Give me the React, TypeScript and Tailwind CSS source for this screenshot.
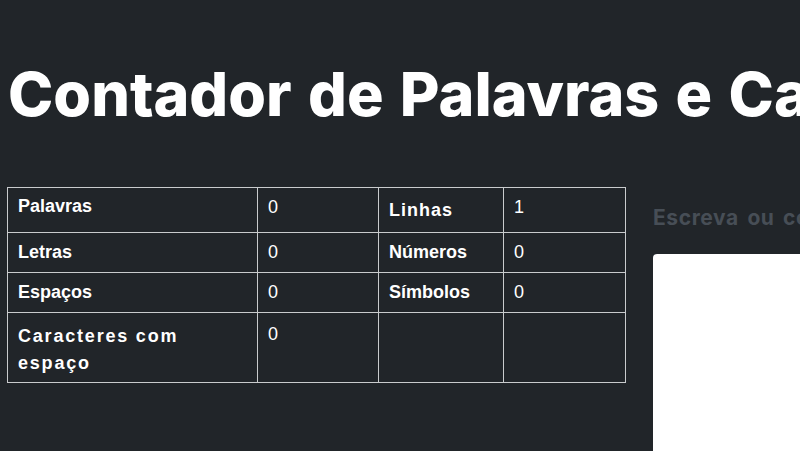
const stats = [
  { label: "Palavras", value: "0", label2: "Linhas", value2: "1" },
  { label: "Letras", value: "0", label2: "Números", value2: "0" },
  { label: "Espaços", value: "0", label2: "Símbolos", value2: "0" },
  { label: "Caracteres com espaço", value: "0", label2: "", value2: "" },
];

const cell = "border border-[#c9cbcd] px-[10px] align-top";

export default function App() {
  return (
    <div className="h-[451px] w-full overflow-hidden bg-[#212529] text-white [font-family:'Liberation_Sans',Arial,sans-serif]">
      <h1 className="pt-[64px] pl-[8px] whitespace-nowrap text-[61px] leading-[61px] font-extrabold tracking-[0px] [word-spacing:3px] [font-family:Inter,sans-serif]">
        Contador de Palavras e Caracteres
      </h1>

      <div className="mt-[62px] flex items-start gap-[27px] pl-[7px]">
        {/* counters */}
        <table className="w-[618px] shrink-0 table-fixed border-collapse text-[18px] leading-[27px]">
          <colgroup>
            <col className="w-[250px]" />
            <col className="w-[121px]" />
            <col className="w-[125px]" />
            <col className="w-[122px]" />
          </colgroup>
          <tbody>
            <tr className="h-[45px]">
              <td className={`${cell} pt-[5px] font-bold`}>{stats[0].label}</td>
              <td className={`${cell} pt-[6px]`}>{stats[0].value}</td>
              <td className={`${cell} pt-[9px] font-bold tracking-[1px]`}>{stats[0].label2}</td>
              <td className={`${cell} pt-[6px]`}>{stats[0].value2}</td>
            </tr>
            <tr className="h-[40px]">
              <td className={`${cell} pt-[6px] font-bold`}>{stats[1].label}</td>
              <td className={`${cell} pt-[6px]`}>{stats[1].value}</td>
              <td className={`${cell} pt-[6px] font-bold`}>{stats[1].label2}</td>
              <td className={`${cell} pt-[6px]`}>{stats[1].value2}</td>
            </tr>
            <tr className="h-[40px]">
              <td className={`${cell} pt-[6px] font-bold`}>{stats[2].label}</td>
              <td className={`${cell} pt-[6px]`}>{stats[2].value}</td>
              <td className={`${cell} pt-[6px] font-bold`}>{stats[2].label2}</td>
              <td className={`${cell} pt-[6px]`}>{stats[2].value2}</td>
            </tr>
            <tr className="h-[70px]">
              <td className={`${cell} pt-[10px] font-bold tracking-[1.8px]`}>{stats[3].label}</td>
              <td className={`${cell} pt-[8px]`}>{stats[3].value}</td>
              <td className={cell}></td>
              <td className={cell}></td>
            </tr>
          </tbody>
        </table>

        {/* input */}
        <div className="mt-[17px] w-[420px] shrink-0">
          <h2 className="whitespace-nowrap text-[21px] leading-[28px] font-bold tracking-[0.6px] [word-spacing:3px] text-[#474e56] [font-family:Inter,sans-serif]">
            Escreva ou cole seu texto aqui
          </h2>
          <textarea className="mt-[22px] block h-[260px] w-full resize-none rounded-[4px] bg-white p-3 text-black outline-none" />
        </div>
      </div>
    </div>
  );
}
